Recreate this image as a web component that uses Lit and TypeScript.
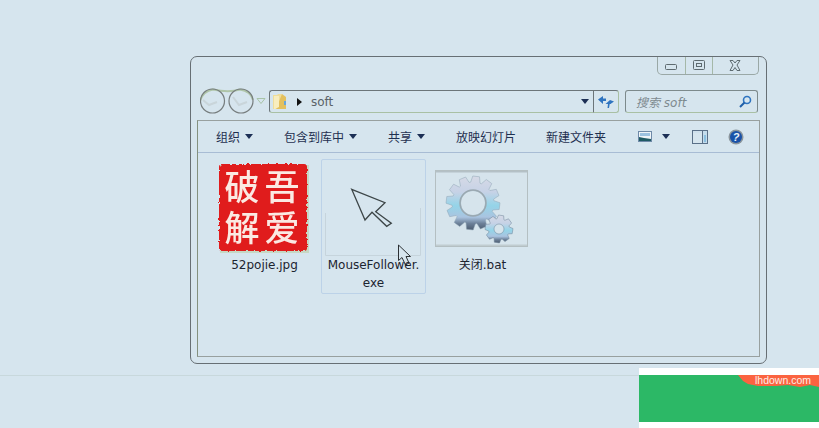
import { LitElement, html, css, svg } from "lit";
import { customElement } from "lit/decorators.js";

function gear(cx: number, cy: number, ro: number, ri: number, teeth: number, rot = 0) {
  const pts: string[] = [];
  const step = (Math.PI * 2) / teeth;
  for (let i = 0; i < teeth; i++) {
    const a = i * step + rot;
    const seq: [number, number][] = [
      [ri, -0.5], [ro, -0.3], [ro, 0.18], [ri, 0.36],
    ];
    for (const [r, f] of seq) {
      const t = a + f * step;
      pts.push(`${(cx + r * Math.cos(t)).toFixed(1)},${(cy + r * Math.sin(t)).toFixed(1)}`);
    }
  }
  return "M" + pts.join("L") + "Z";
}

@customElement("app-root")
export class AppRoot extends LitElement {
  static styles = css`
    :host {
      display: block;
      width: 819px;
      height: 428px;
      overflow: hidden;
      background: #d6e5ee;
      font-family: "Noto Sans CJK SC", "Noto Sans", sans-serif;
      font-size: 12px;
      color: #1e2a3a;
      padding-top: 56px;
      box-sizing: border-box;
    }
    .window {
      margin-left: 190px;
      width: 577px;
      height: 308px;
      box-sizing: border-box;
      border: 1px solid #676f74;
      border-radius: 7px;
      padding: 0 6px;
      display: flex;
      flex-direction: column;
    }
    .caption {
      align-self: flex-end;
      margin-right: 1px;
      display: flex;
      height: 18px;
      box-sizing: border-box;
      border: 1px solid #9aa8a6;
      border-top: none;
      border-radius: 0 0 5px 5px;
    }
    .caption div {
      display: flex;
      align-items: center;
      justify-content: center;
      box-sizing: border-box;
      border-left: 1px solid #a5b8a8;
    }
    .caption div:first-child { border-left: none; width: 27px; }
    .caption div:nth-child(2) { width: 27px; }
    .caption div:nth-child(3) { width: 46px; }
    .nav {
      display: flex;
      height: 23px;
      margin-top: 15px;
    }
    .backfwd { width: 69px; flex: none; margin-top: -2px; margin-left: 3px; }
    .addr {
      width: 324px;
      box-sizing: border-box;
      border: 1px solid #6c7579;
      border-bottom-color: #a9c0a4;
      border-right: none;
      border-radius: 3px 0 0 3px;
      display: flex;
      align-items: center;
      color: #5a6268;
    }
    .folder { margin-left: 3px; }
    .chev { margin-left: 10px; }
    .crumb { margin-left: 9px; flex: 1; font-family: "DejaVu Sans", sans-serif; font-size: 12px; }
    .dd { margin-right: 4px; }
    .refresh {
      width: 26px;
      box-sizing: border-box;
      border: 1px solid #6c7579;
      border-bottom-color: #a9c0a4;
      border-right-color: #a9c0a4;
      border-radius: 0 3px 3px 0;
      display: flex;
      align-items: center;
      justify-content: center;
    }
    .search {
      margin-left: 6px;
      width: 133px;
      box-sizing: border-box;
      border: 1px solid #7d8a8c;
      border-bottom-color: #a9c0a4;
      border-radius: 3px;
      display: flex;
      align-items: center;
      justify-content: space-between;
      padding: 0 5px 0 10px;
      color: #7e8a90;
      font-family: "DejaVu Sans", "Noto Sans CJK SC", sans-serif;
      font-style: italic;
    }
    .pane {
      margin-top: 7px;
      flex: 1;
      margin-bottom: 6px;
      border: 1px solid #98a09f;
      border-left-color: #84917f;
      display: flex;
      flex-direction: column;
      min-height: 0;
    }
    .toolbar {
      height: 32px;
      box-sizing: border-box;
      border-bottom: 1px solid #a8bcd4;
      display: flex;
      align-items: center;
      padding: 0 15px 0 18px;
      color: #1f3050;
    }
    .tool { display: flex; align-items: center; gap: 5px; margin-right: 31px; white-space: nowrap; line-height: 16px; }
    .tool:nth-child(4) { margin-right: 30px; }
    .right { margin-left: auto; display: flex; align-items: center; }
    .caret { width: 0; height: 0; border: 4px solid transparent; border-top: 5px solid #1c2f55; border-bottom: none; flex: none; }
    .view-caret { margin: 0 22px 0 10px; }
    .help { margin-left: 20px; }
    .files {
      flex: 1;
      display: flex;
      gap: 4px;
      padding: 6px 0 0 14px;
      align-items: flex-start;
    }
    .tile {
      width: 105px;
      height: 135px;
      box-sizing: border-box;
      border: 1px solid transparent;
      border-radius: 2px;
      display: flex;
      flex-direction: column;
      align-items: center;
    }
    .tile.sel { border-color: #bcd2e8; }
    .thumb {
      height: 96px;
      width: 103px;
      flex: none;
      box-sizing: border-box;
      padding-right: 2px;
      display: flex;
      align-items: center;
      justify-content: center;
    }
    .thumb.full { padding-right: 0; }
    .thumb svg { overflow: visible; flex: none; }
    .label {
      font-family: "DejaVu Sans", "Noto Sans CJK SC", sans-serif;
      font-size: 12px;
      line-height: 18px;
      text-align: center;
      width: 103px;
      color: #1c2430;
      white-space: nowrap;
    }
    .seal-text {
      font-family: "Noto Sans CJK SC", sans-serif;
      font-weight: 500;
      font-size: 35px;
      fill: #fbe9e2;
    }
    .bottom { display: flex; margin-top: 4px; height: 60px; }
    .strip { width: 639px; height: 8px; box-sizing: border-box; border-bottom: 1px solid #c8d8dc; }
    .ad { flex: 1; background: #fff; padding: 7px 0 6px; box-sizing: border-box; }
    .green {
      height: 47px;
      background: #2cb866;
      position: relative;
      overflow: hidden;
    }
    .ribbon { position: absolute; left: 99px; top: 0; }
    .mark {
      position: absolute;
      right: 8px;
      top: -1px;
      color: #fdeee8;
      font: 10.5px/13px "Liberation Sans", sans-serif;
    }
  `;

  render() {
    const hole = (cx: number, cy: number, r: number) =>
      `M${cx - r},${cy}a${r},${r} 0 1,0 ${2 * r},0a${r},${r} 0 1,0 ${-2 * r},0Z`;
    return html`
      <div class="window">
        <div class="caption">
          <div><svg width="13" height="11"><rect x=".5" y="4.500" width="11" height="5" rx="1" fill="none" stroke="#5e6b70"/></svg></div>
          <div><svg width="13" height="11"><rect x=".5" y=".5" width="11" height="9" rx="1" fill="none" stroke="#5e6b70"/><rect x="3.500" y="3.500" width="5" height="3" fill="none" stroke="#5e6b70"/></svg></div>
          <div><svg width="13" height="11"><path d="M1 .5h3L6 3 8 .5h3L8 5l3 5.500H8L6 7.500 4 10.500H1L4 5Z" fill="none" stroke="#5e6b70"/></svg></div>
        </div>
        <div class="nav">
          <svg class="backfwd" width="69" height="26" viewBox="0 0 69 26">
            <path d="M0 13Q3 3 13 1.500Q29 5 40 1.500Q51 3 53 12" fill="none" stroke="#aec4a8" stroke-width="2"/>
            <path d="M3 12l6 5 8-3" fill="none" stroke="#c9d5da" stroke-width="2"/>
            <path d="M33 9l6 8 8-3" fill="none" stroke="#c9d5da" stroke-width="2"/>
            <circle cx="12.500" cy="13" r="12" fill="none" stroke="#767d7e" stroke-width="1.200"/>
            <circle cx="41" cy="13" r="12" fill="none" stroke="#767d7e" stroke-width="1.200"/>
            <path d="M57 10.500h8l-4 5Z" fill="none" stroke="#a8c4a8"/>
          </svg>
          <div class="addr">
            <svg class="folder" width="14" height="17" viewBox="0 0 14 17">
              <path d="M0 2h4l1-1h4v3h4v12H0Z" fill="#efdd9a"/>
              <path d="M9 1l4 3v12H3Z" fill="#e3c05e"/>
              <path d="M1 3h5v11l-4 2H1Z" fill="#f8edbe"/>
              <rect x="11" y="8" width="2" height="4" fill="#6aa6d8"/>
            </svg>
            <svg class="chev" width="5" height="8"><path d="M0 0l5 4-5 4Z" fill="#111"/></svg>
            <span class="crumb">soft</span>
            <span class="caret dd"></span>
          </div>
          <div class="refresh">
            <svg width="17" height="14" viewBox="0 0 17 14"><path d="M0 4.500L5 1v2.500h3V6H5v3Z" fill="#2f74c0"/><path d="M16 6.500l-3.500 2.500H11.700L11 13H9.500L10 9H7.500L12 5Z" fill="#2f74c0"/></svg>
          </div>
          <div class="search">
            <span>搜索 soft</span>
            <svg width="13" height="13" viewBox="0 0 13 13"><circle cx="8" cy="5" r="3.500" fill="none" stroke="#2f74c0" stroke-width="1.600"/><path d="M5.500 7.500L1 12" stroke="#1f5fa8" stroke-width="2"/></svg>
          </div>
        </div>
        <div class="pane">
          <div class="toolbar">
            <div class="tool">组织<span class="caret"></span></div>
            <div class="tool">包含到库中<span class="caret"></span></div>
            <div class="tool">共享<span class="caret"></span></div>
            <div class="tool">放映幻灯片</div>
            <div class="tool">新建文件夹</div>
            <div class="right">
              <svg width="14" height="11" viewBox="0 0 14 11"><rect x=".5" y=".5" width="13" height="10" fill="#eef4f8" stroke="#6f8aa8"/><rect x="2" y="2" width="10" height="3" fill="#9cc2e0"/><path d="M1 6l5 1 7 1v2H1Z" fill="#1f5a64"/></svg>
              <span class="caret view-caret"></span>
              <svg width="16" height="14" viewBox="0 0 16 14"><rect x=".5" y=".5" width="15" height="13" fill="none" stroke="#5a7088"/><path d="M10.500 1v12" stroke="#5a7088"/><rect x="11" y="1" width="4" height="12" fill="#c4dcec"/><rect x="12" y="5" width="2" height="7" fill="#8cc0e0"/><path d="M1 1h9v2H1Z" fill="#cfe0ec"/></svg>
              <svg class="help" width="16" height="16" viewBox="0 0 16 16"><circle cx="8" cy="8" r="7.500" fill="#8a959c"/><circle cx="8" cy="8" r="6" fill="#1a52a8"/><text x="8" y="12" text-anchor="middle" font-family="Liberation Sans" font-weight="700" font-style="italic" font-size="11" fill="#e8f2fa">?</text></svg>
            </div>
          </div>
          <div class="files">
            <div class="tile">
              <div class="thumb">
                <svg width="89" height="88" viewBox="0 0 89 88">
                  <defs>
                    <filter id="rough" x="-5%" y="-5%" width="110%" height="110%">
                      <feTurbulence type="fractalNoise" baseFrequency="0.35" numOctaves="2" seed="4" result="n"/>
                      <feDisplacementMap in="SourceGraphic" in2="n" scale="3.500"/>
                    </filter>
                    <filter id="soft" x="-5%" y="-5%" width="110%" height="110%">
                      <feTurbulence type="fractalNoise" baseFrequency="0.2" numOctaves="1" seed="7" result="n"/>
                      <feDisplacementMap in="SourceGraphic" in2="n" scale="1.500"/>
                    </filter>
                  </defs>
                  <rect x="1" y="1" width="89" height="88" fill="#c6d8c4"/>
                  <rect x="0" y="0" width="88" height="87" rx="3" fill="#e01a1c" filter="url(#rough)"/>
                  <g filter="url(#soft)" text-anchor="middle">
                    <text class="seal-text" x="23" y="36">破</text>
                    <text class="seal-text" x="63" y="36">吾</text>
                    <text class="seal-text" x="23" y="77">解</text>
                    <text class="seal-text" x="63" y="77">爱</text>
                  </g>
                </svg>
              </div>
              <div class="label">52pojie.jpg</div>
            </div>
            <div class="tile sel">
              <div class="thumb full">
                <svg width="103" height="96" viewBox="0 0 103 96">
                  <path d="M3.500 53V95.500H98.500V48" fill="none" stroke="#c6d4dc"/>
                  <path d="M29.700 29.300L63 42.700 53.700 51.700 69.300 63.300 64.700 66.300 50 52.300 43 60Z" fill="#d6e5ee" stroke="#3d4648" stroke-width="1.300"/>
                  <path d="M76.500 85V100.500L80 97.500 83.500 105 87 103 84 96.500H88.500Z" fill="#d6e5ee" stroke="#2c3034" stroke-width="1"/>
                </svg>
              </div>
              <div class="label">MouseFollower.<br />exe</div>
            </div>
            <div class="tile">
              <div class="thumb">
                <svg width="93" height="77" viewBox="0 0 93 77">
                  <defs>
                    <linearGradient id="g" x1="0" y1="0" x2="0" y2="1">
                      <stop offset="0" stop-color="#d6dae6"/><stop offset=".3" stop-color="#c6d2e6"/><stop offset=".55" stop-color="#94d4e8"/><stop offset=".76" stop-color="#aac4e0"/><stop offset=".88" stop-color="#6c8098"/><stop offset="1" stop-color="#4c5c70"/>
                    </linearGradient>
                  </defs>
                  <rect x=".5" y=".5" width="92" height="76" fill="#d6e4ec" stroke="#b4bfc2"/>
                  <rect x="1" y="1" width="91" height="1.500" fill="#b4c0c6"/>
                  <rect x="1" y="74.500" width="91" height="1.500" fill="#c0ccd0"/>
                  ${svg`<path fill-rule="evenodd" d="${gear(38, 33, 27, 21, 12, 0.15)}${hole(38, 33, 12.5)}" fill="url(#g)" stroke="#8fa4b4" stroke-width=".5"/>`}
                  <circle cx="38" cy="33" r="13" fill="none" stroke="#9aa8b0" stroke-width="1.500"/>
                  ${svg`<path fill-rule="evenodd" d="${gear(64, 59, 14, 10.5, 8, 0.2)}${hole(64, 59, 5)}" fill="url(#g)" stroke="#6c8296" stroke-width=".5"/>`}
                </svg>
              </div>
              <div class="label">关闭.bat</div>
            </div>
          </div>
        </div>
      </div>
      <div class="bottom">
        <div class="strip"></div>
        <div class="ad">
          <div class="green">
            <svg class="ribbon" width="81" height="13" viewBox="0 0 81 13"><path d="M0 0H81V12L72 10 62 12 50 10 38 11 20 11 10 9 5 6Z" fill="#fb6340"/></svg>
            <span class="mark">lhdown.com</span>
          </div>
        </div>
      </div>
    `;
  }
}
